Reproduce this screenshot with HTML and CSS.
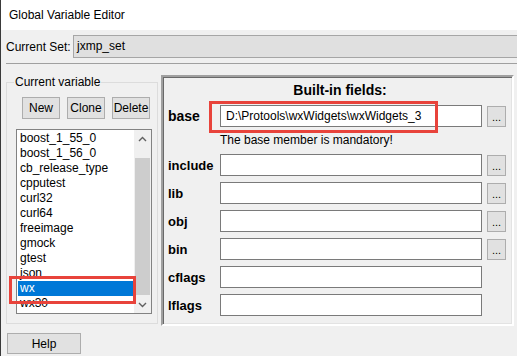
FILE: index.html
```html
<!DOCTYPE html>
<html lang="en">
<head>
  <meta charset="UTF-8">
  <title>Global Variable Editor</title>
  <link rel="stylesheet" href="styles.css">
</head>
<body>

  <div class="window">
    <div class="titlebar">Global Variable Editor</div>

    <div class="client">
      <div class="set-row">
        <span class="set-label">Current Set:</span>
        <div class="set-input">jxmp_set</div>
      </div>
      <div class="separator"></div>

      <div class="main">
        <fieldset class="group">
          <legend>Current variable</legend>
          <div class="btn-row">
            <button class="btn">New</button>
            <button class="btn">Clone</button>
            <button class="btn">Delete</button>
          </div>
          <div class="listbox">
            <ul class="items">
              <li>boost_1_55_0</li>
              <li>boost_1_56_0</li>
              <li>cb_release_type</li>
              <li>cpputest</li>
              <li>curl32</li>
              <li>curl64</li>
              <li>freeimage</li>
              <li>gmock</li>
              <li>gtest</li>
              <li>json</li>
              <li class="selected">wx</li>
              <li>wx30</li>
            </ul>
            <div class="scrollbar">
              <div class="arrow">
                <svg width="9" height="6" viewBox="0 0 9 6"><path d="M1 5 L4.5 1.5 L8 5" fill="none" stroke="#606060" stroke-width="1.4"/></svg>
              </div>
              <div class="track"><div class="thumb"></div></div>
              <div class="arrow">
                <svg width="9" height="6" viewBox="0 0 9 6"><path d="M1 1 L4.5 4.5 L8 1" fill="none" stroke="#606060" stroke-width="1.4"/></svg>
              </div>
            </div>
          </div>
        </fieldset>

        <div class="fields">
          <div class="fields-title">Built-in fields:</div>

          <div class="field-row">
            <label class="base-label" for="f-base">base</label>
            <input type="text" id="f-base" value="D:\Protools\wxWidgets\wxWidgets_3" readonly>
            <button class="browse">...</button>
          </div>
          <div class="field-note">The base member is mandatory!</div>

          <div class="field-row">
            <label for="f-include">include</label>
            <input type="text" id="f-include" readonly>
            <button class="browse">...</button>
          </div>
          <div class="field-row">
            <label for="f-lib">lib</label>
            <input type="text" id="f-lib" readonly>
            <button class="browse">...</button>
          </div>
          <div class="field-row">
            <label for="f-obj">obj</label>
            <input type="text" id="f-obj" readonly>
            <button class="browse">...</button>
          </div>
          <div class="field-row">
            <label for="f-bin">bin</label>
            <input type="text" id="f-bin" readonly>
            <button class="browse">...</button>
          </div>
          <div class="field-row">
            <label for="f-cflags">cflags</label>
            <input type="text" id="f-cflags" readonly>
          </div>
          <div class="field-row">
            <label for="f-lflags">lflags</label>
            <input type="text" id="f-lflags" readonly>
          </div>
        </div>
      </div>

      <button class="btn help">Help</button>
    </div>

    <!-- annotation boxes drawn over the dialog -->
    <div class="mark mark-list"></div>
    <div class="mark mark-base"></div>
  </div>

</body>
</html>
```

FILE: styles.css
```css
* {
  box-sizing: border-box;
}

body {
  margin: 0;
  padding: 0;
  font-family: 'Liberation Sans', Arial, sans-serif;
  font-size: 12px;
  color: #000;
  background: #f0f0f0;
}

.window {
  position: relative;
  width: 517px;
  height: 356px;
  border-left: 1px solid #3a3a3a;
  overflow: hidden;
}

.titlebar {
  height: 30px;
  line-height: 30px;
  padding-left: 8px;
  background: #fff;
}

.client {
  background: #f0f0f0;
  height: 326px;
}

/* current set */
.set-row {
  display: flex;
  align-items: center;
  padding: 5px 0 0 5px;
}

.set-label {
  width: 67px;
}

.set-input {
  flex: 1;
  height: 23px;
  line-height: 21px;
  padding-left: 3px;
  margin-right: -4px;
  background: #e0e0e0;
  border: 1px solid #a6a6a6;
}

.separator {
  height: 1px;
  margin: 5px 0 0 5px;
  background: #a0a0a0;
}

.main {
  display: flex;
  align-items: flex-start;
}

/* left group */
.group {
  margin: 11px 0 0 5px;
  padding: 8px 0 9px 15px;
  width: 152px;
  border: 1px solid #dcdcdc;
}

.group legend {
  margin-left: -8px;
  padding: 0 1px;
  line-height: 14px;
}

.btn-row {
  display: flex;
  gap: 7px;
}

.btn {
  height: 22px;
  padding: 0;
  font-family: inherit;
  font-size: 12px;
  color: #000;
  background: #e1e1e1;
  border: 1px solid #adadad;
}

.btn-row .btn {
  width: 38px;
}

.listbox {
  display: flex;
  width: 136px;
  height: 185px;
  margin: 10px 0 0 -6px;
  background: #fff;
  border: 1px solid #828282;
}

.items {
  flex: 1;
  list-style: none;
  margin: 0;
  padding: 1px 0 0 0;
  overflow: hidden;
}

.items li {
  height: 15px;
  line-height: 15px;
  margin: 0 1px;
  padding-left: 2px;
  white-space: nowrap;
}

.items li.selected {
  background: #0078d7;
  color: #fff;
}

.scrollbar {
  width: 17px;
  display: flex;
  flex-direction: column;
  background: #f0f0f0;
}

.arrow {
  height: 17px;
  display: flex;
  align-items: center;
  justify-content: center;
}

.track {
  flex: 1;
  padding: 11px 0 1px 0;
}

.thumb {
  height: 100%;
  margin: 0 1px;
  background: #cdcdcd;
}

/* right panel */
.fields {
  width: 353px;
  height: 251px;
  margin: 11px 0 0 3px;
  padding: 5px 0 0 5px;
  border: 2px solid;
  border-color: #a0a0a0 #fff #fff #a0a0a0;
  box-shadow: inset 1px 1px 0 #696969, inset -1px -1px 0 #e3e3e3;
}

.fields-title {
  text-align: center;
  font-weight: bold;
  font-size: 14px;
  line-height: 16px;
  margin-bottom: 7px;
}

.field-row {
  display: flex;
  align-items: center;
  height: 22px;
  margin-bottom: 6px;
}

.field-note {
  height: 27px;
  line-height: 27px;
  margin: -6px 0 0 52px;
}

.field-row label {
  width: 52px;
  font-weight: bold;
  font-size: 13px;
}

.field-row .base-label {
  font-size: 14px;
}

.field-row input {
  width: 262px;
  height: 22px;
  padding: 0 5px;
  font-family: inherit;
  font-size: 12px;
  color: #000;
  background: #fff;
  border: 1px solid #7a7a7a;
  outline: none;
}

.browse {
  width: 19px;
  height: 21px;
  margin-left: 5px;
  padding: 0 0 3px 0;
  font-family: inherit;
  font-size: 11px;
  line-height: 11px;
  color: #000;
  background: #e1e1e1;
  border: 1px solid #adadad;
  display: flex;
  align-items: flex-end;
  justify-content: center;
}

.help {
  width: 74px;
  height: 21px;
  margin: 7px 0 0 6px;
}

/* red annotation boxes */
.mark {
  position: absolute;
  border: 3px solid #e8433b;
}

.mark-list {
  left: 8px;
  top: 276px;
  width: 127px;
  height: 28px;
}

.mark-base {
  left: 208px;
  top: 101px;
  width: 229px;
  height: 32px;
}
```
